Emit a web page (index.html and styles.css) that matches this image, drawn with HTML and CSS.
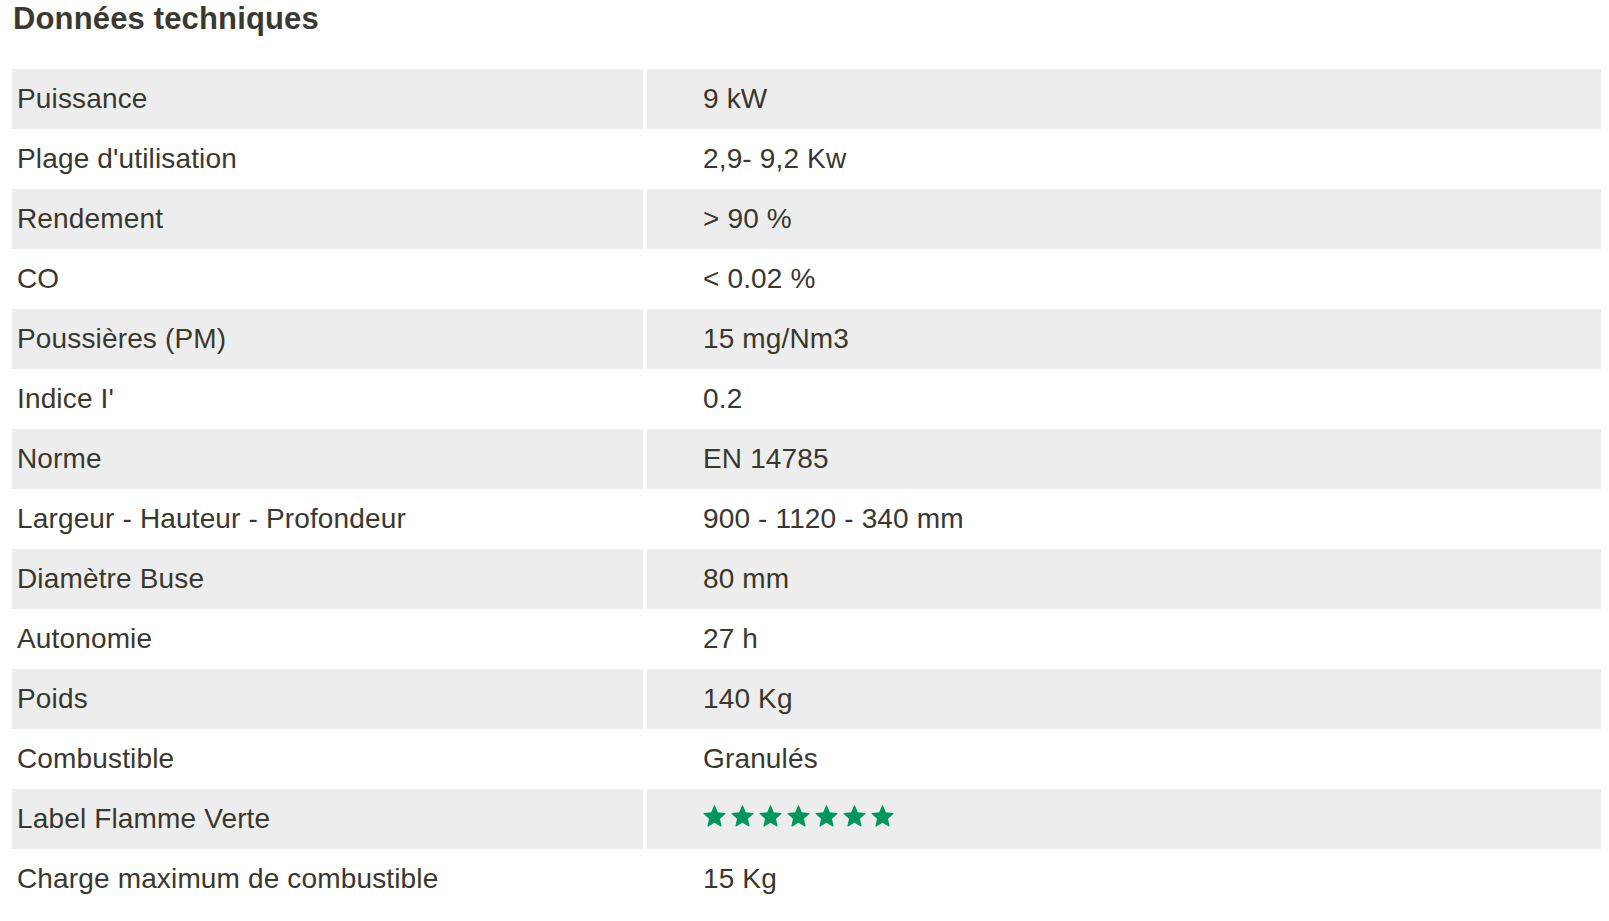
FILE: index.html
```html
<!DOCTYPE html>
<html lang="fr">
<head>
<meta charset="utf-8">
<title>Données techniques</title>
<link rel="stylesheet" href="styles.css">
</head>
<body>
<section class="specs">
  <h2 class="specs-title">Données techniques</h2>
  <table class="specs-table">
    <tbody>
      <tr class="odd"><td class="label">Puissance</td><td class="value">9 kW</td></tr>
      <tr><td class="label">Plage d'utilisation</td><td class="value">2,9- 9,2 Kw</td></tr>
      <tr class="odd"><td class="label">Rendement</td><td class="value">&gt; 90 %</td></tr>
      <tr><td class="label">CO</td><td class="value">&lt; 0.02 %</td></tr>
      <tr class="odd"><td class="label">Poussières (PM)</td><td class="value">15 mg/Nm3</td></tr>
      <tr><td class="label">Indice I'</td><td class="value">0.2</td></tr>
      <tr class="odd"><td class="label">Norme</td><td class="value">EN 14785</td></tr>
      <tr><td class="label">Largeur - Hauteur - Profondeur</td><td class="value">900 - 1120 - 340 mm</td></tr>
      <tr class="odd"><td class="label">Diamètre Buse</td><td class="value">80 mm</td></tr>
      <tr><td class="label">Autonomie</td><td class="value">27 h</td></tr>
      <tr class="odd"><td class="label">Poids</td><td class="value">140 Kg</td></tr>
      <tr><td class="label">Combustible</td><td class="value">Granulés</td></tr>
      <tr class="odd"><td class="label">Label Flamme Verte</td><td class="value">
        <span class="stars">
          <svg class="star" viewBox="0 0 24 24"><path d="M12 1 L15.12 8.21 L22.94 8.95 L17.04 14.14 L18.76 21.8 L12 17.8 L5.24 21.8 L6.96 14.14 L1.06 8.95 L8.88 8.21Z"/></svg>
          <svg class="star" viewBox="0 0 24 24"><path d="M12 1 L15.12 8.21 L22.94 8.95 L17.04 14.14 L18.76 21.8 L12 17.8 L5.24 21.8 L6.96 14.14 L1.06 8.95 L8.88 8.21Z"/></svg>
          <svg class="star" viewBox="0 0 24 24"><path d="M12 1 L15.12 8.21 L22.94 8.95 L17.04 14.14 L18.76 21.8 L12 17.8 L5.24 21.8 L6.96 14.14 L1.06 8.95 L8.88 8.21Z"/></svg>
          <svg class="star" viewBox="0 0 24 24"><path d="M12 1 L15.12 8.21 L22.94 8.95 L17.04 14.14 L18.76 21.8 L12 17.8 L5.24 21.8 L6.96 14.14 L1.06 8.95 L8.88 8.21Z"/></svg>
          <svg class="star" viewBox="0 0 24 24"><path d="M12 1 L15.12 8.21 L22.94 8.95 L17.04 14.14 L18.76 21.8 L12 17.8 L5.24 21.8 L6.96 14.14 L1.06 8.95 L8.88 8.21Z"/></svg>
          <svg class="star" viewBox="0 0 24 24"><path d="M12 1 L15.12 8.21 L22.94 8.95 L17.04 14.14 L18.76 21.8 L12 17.8 L5.24 21.8 L6.96 14.14 L1.06 8.95 L8.88 8.21Z"/></svg>
          <svg class="star" viewBox="0 0 24 24"><path d="M12 1 L15.12 8.21 L22.94 8.95 L17.04 14.14 L18.76 21.8 L12 17.8 L5.24 21.8 L6.96 14.14 L1.06 8.95 L8.88 8.21Z"/></svg>
        </span>
      </td></tr>
      <tr><td class="label">Charge maximum de combustible</td><td class="value">15 Kg</td></tr>
    </tbody>
  </table>
</section>
</body>
</html>
```

FILE: styles.css
```css
html, body {
  margin: 0;
  padding: 0;
  background: #ffffff;
}

body {
  font-family: "Liberation Sans", Arial, sans-serif;
  color: #39372e;
}

.specs {
  padding: 0 4px 0 8px;
}

.specs-title {
  margin: 0 0 32px 5px;
  padding-top: 1px;
  font-size: 31px;
  line-height: 36px;
  font-weight: bold;
  letter-spacing: 0.15px;
  color: #3b392f;
}

.specs-table {
  width: 100%;
  border-collapse: separate;
  border-spacing: 4px 0;
  font-size: 28px;
  letter-spacing: 0.15px;
  table-layout: fixed;
}

.specs-table td {
  height: 60px;
  padding: 0;
  vertical-align: middle;
  white-space: nowrap;
}

.specs-table .label {
  width: 626px;
  padding-left: 5px;
}

.specs-table .value {
  padding-left: 56px;
}

.specs-table tr.odd td {
  background: #ededed;
}

.stars {
  display: inline-flex;
  gap: 5px;
  vertical-align: middle;
  position: relative;
  top: -4px;
}

.star {
  width: 23px;
  height: 23px;
  fill: #00975f;
  stroke: #00975f;
  stroke-width: 1.2;
  stroke-linejoin: round;
}
```
